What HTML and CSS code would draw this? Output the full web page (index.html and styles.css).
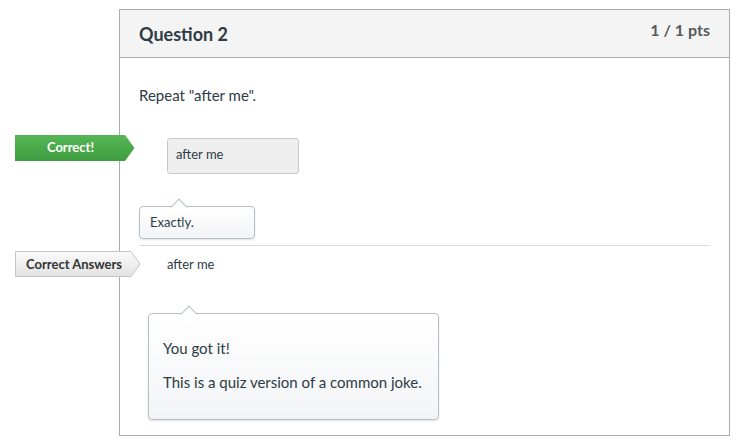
FILE: index.html
```html
<!DOCTYPE html>
<html>
<head>
<meta charset="utf-8">
<link rel="stylesheet" href="styles.css">
</head>
<body>
<div class="question">
  <div class="q-header">
    <h2 class="q-title">Question 2</h2>
    <div class="q-points">1 / 1 pts</div>
  </div>
  <div class="q-body">
    <p class="q-text">Repeat "after me".</p>
    <div class="answer-row">
      <div class="badge badge-correct">
        <svg class="badge-shape" width="120" height="26" viewBox="0 0 120 26">
          <defs>
            <linearGradient id="gG" x1="0" y1="0" x2="0" y2="1">
              <stop offset="0" stop-color="#56b656"/>
              <stop offset="1" stop-color="#3f9e3f"/>
            </linearGradient>
          </defs>
          <polygon points="0,0 110,0 119.5,13 110,26 0,26" fill="url(#gG)"/>
        </svg>
        <span class="badge-label">Correct!</span>
      </div>
      <div class="answer-input">after me</div>
    </div>
    <div class="tip tip-small">Exactly.</div>
    <hr class="sep">
    <div class="answer-row answer-row--text">
      <div class="badge badge-answers">
        <svg class="badge-shape" width="126" height="26" viewBox="0 0 126 26">
          <defs>
            <linearGradient id="gA" x1="0" y1="0" x2="0" y2="1">
              <stop offset="0" stop-color="#fbfbfb"/>
              <stop offset="1" stop-color="#e2e2e2"/>
            </linearGradient>
          </defs>
          <polygon points="0.5,0.5 116,0.5 125,13 116,25.5 0.5,25.5" fill="url(#gA)" stroke="#c4c4c4" stroke-width="1"/>
        </svg>
        <span class="badge-label">Correct Answers</span>
      </div>
      <div class="answer-text">after me</div>
    </div>
    <div class="tip tip-large">
      <p class="tip-line">You got it!</p>
      <p class="tip-line">This is a quiz version of a common joke.</p>
    </div>
  </div>
</div>
</body>
</html>
```
FILE: styles.css
```css
* { box-sizing: border-box; }
html, body { margin: 0; padding: 0; background: #fff; }
body {
  font-family: Lato, "Open Sans", sans-serif;
  color: #2d3b45;
  width: 738px;
  height: 446px;
  overflow: hidden;
}
.question {
  margin: 9px 0 0 119px;
  width: 611px;
  height: 427px;
  border: 1px solid #ababab;
}
.q-header {
  height: 48px;
  background: #f4f4f4;
  border-bottom: 1px solid #ababab;
  display: flex;
  justify-content: space-between;
  align-items: center;
  padding: 0 19px;
}
.q-title {
  margin: 0;
  font-size: 18px;
  font-weight: 700;
  line-height: 22px;
  color: #2d3b45;
}
.q-points {
  align-self: flex-start;
  margin-top: 10px;
  font-size: 16px;
  font-weight: 700;
  line-height: 20px;
  color: #555a5e;
}
.q-body {
  padding: 0 19px;
}
.q-text {
  margin: 27px 0 0;
  font-size: 15px;
  line-height: 20px;
}
.answer-row {
  position: relative;
  margin-top: 33px;
  height: 36px;
  display: flex;
}
.answer-row--text {
  margin-top: 8px;
  height: 20px;
}
.badge {
  position: absolute;
  left: -124px;
  top: -3px;
  display: flex;
  align-items: center;
}
.badge-shape { display: block; }
.badge-label {
  position: absolute;
  top: 0;
  left: 0;
  font-size: 13px;
  font-weight: 700;
  line-height: 24px;
}
.badge-correct .badge-label {
  width: 111px;
  text-align: center;
  color: #fff;
}
.badge-answers .badge-label {
  left: 11px;
  line-height: 26px;
  color: #333;
}
.answer-input {
  margin-left: 28px;
  width: 132px;
  height: 36px;
  padding: 0 8px;
  background: #eeeeee;
  border: 1px solid #c8c8c8;
  border-radius: 3px;
  font-size: 13px;
  line-height: 31px;
}
.answer-text {
  margin-left: 28px;
  font-size: 13px;
  line-height: 20px;
}
.tip {
  position: relative;
  background: linear-gradient(#ffffff, #f3f4f6);
  border: 1px solid #b6bec6;
  border-radius: 4px;
  box-shadow: 0 1px 2px rgba(0,0,0,0.12);
}
.tip::before {
  content: "";
  position: absolute;
  top: -6px;
  width: 11px;
  height: 11px;
  background: #fff;
  border-top: 1px solid #b6bec6;
  border-left: 1px solid #b6bec6;
  transform: rotate(45deg);
}
.tip-small {
  margin-top: 32px;
  width: 116px;
  height: 33px;
  padding: 0 10px;
  font-size: 13px;
  line-height: 30px;
}
.tip-small::before { left: 33px; }
.sep {
  margin: 6px 0 0;
  border: 0;
  border-top: 1px solid #dcdcdc;
  height: 0;
}
.tip-large {
  margin: 39px 0 0 9px;
  width: 291px;
  height: 107px;
  padding: 24px 14px 0;
  font-size: 15px;
}
.tip-large::before { left: 34px; }
.tip-line {
  margin: 0 0 14px;
  line-height: 20px;
}
```
